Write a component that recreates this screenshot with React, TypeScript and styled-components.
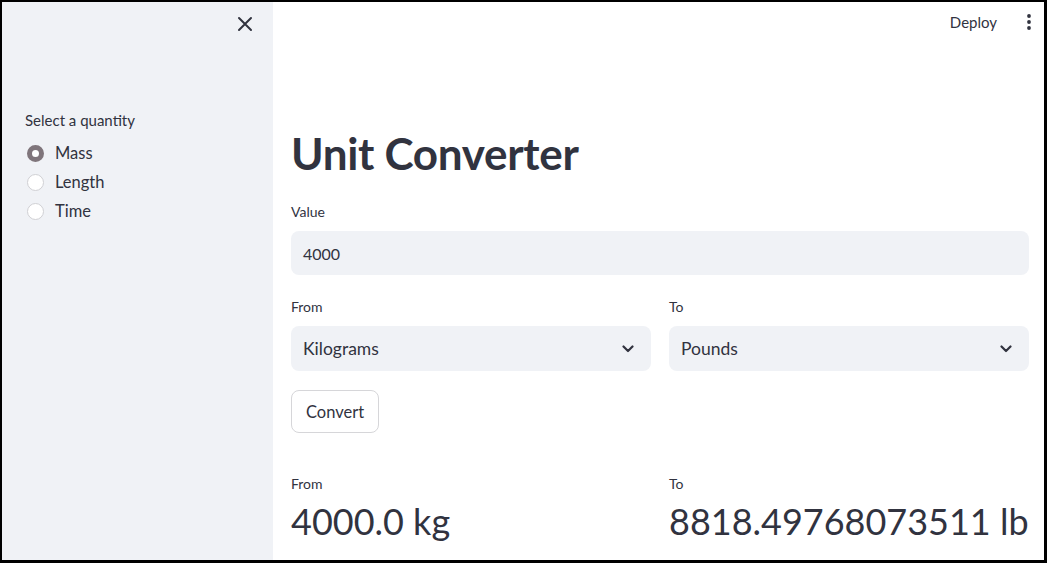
import React from "react";
import styled, {createGlobalStyle} from "styled-components";

const GlobalStyle = createGlobalStyle`
  html, body {
    margin: 0;
    padding: 0;
    background: #ffffff;
  }
  body {
    font-family: Lato, "Noto Sans", sans-serif;
    color: #31333f;
  }
`;

const quantities = ["Mass", "Length", "Time"];

function CloseIcon() {
    return (
        <svg width="16" height="16" viewBox="0 0 16 16">
            <path d="M2 2 L14 14 M14 2 L2 14" stroke="#31333f" strokeWidth="2" strokeLinecap="round"/>
        </svg>
    );
}

function Chevron() {
    return (
        <svg width="12" height="8" viewBox="0 0 12 8">
            <path d="M1.5 1.5 L6 6 L10.5 1.5" stroke="#31333f" strokeWidth="2.2" fill="none" strokeLinecap="round"
                  strokeLinejoin="round"/>
        </svg>
    );
}

function Kebab() {
    return (
        <svg width="6" height="18" viewBox="0 0 6 18">
            <circle cx="3" cy="3" r="1.9" fill="#31333f"/>
            <circle cx="3" cy="9" r="1.9" fill="#31333f"/>
            <circle cx="3" cy="15" r="1.9" fill="#31333f"/>
        </svg>
    );
}

export default function App() {
    return (
        <>
            <GlobalStyle/>
            <Frame>
                <Sidebar>
                    <CloseRow>
                        <IconButton><CloseIcon/></IconButton>
                    </CloseRow>
                    <SideLabel>Select a quantity</SideLabel>
                    <RadioGroup>
                        {quantities.map((q, i) => (
                            <RadioRow key={q}>
                                <RadioDot checked={i === 0}/>
                                <RadioText>{q}</RadioText>
                            </RadioRow>
                        ))}
                    </RadioGroup>
                </Sidebar>
                <Main>
                    <Header>
                        <DeployButton>Deploy</DeployButton>
                        <IconButton><Kebab/></IconButton>
                    </Header>
                    <Content>
                        <Title>Unit Converter</Title>
                        <FieldLabel>Value</FieldLabel>
                        <InputBox>4000</InputBox>
                        <TwoCols>
                            <div>
                                <FieldLabel>From</FieldLabel>
                                <SelectBox>
                                    <span>Kilograms</span>
                                    <Chevron/>
                                </SelectBox>
                            </div>
                            <div>
                                <FieldLabel>To</FieldLabel>
                                <SelectBox>
                                    <span>Pounds</span>
                                    <Chevron/>
                                </SelectBox>
                            </div>
                        </TwoCols>
                        <ConvertButton>Convert</ConvertButton>
                        <TwoCols $top={41}>
                            <div>
                                <MetricLabel>From</MetricLabel>
                                <MetricValue>4000.0 kg</MetricValue>
                            </div>
                            <div>
                                <MetricLabel>To</MetricLabel>
                                <MetricValue>8818.49768073511 lb</MetricValue>
                            </div>
                        </TwoCols>
                    </Content>
                </Main>
            </Frame>
        </>
    );
}

const Frame = styled.div`
  width: 1047px;
  height: 563px;
  box-sizing: border-box;
  border-style: solid;
  border-color: #000;
  border-width: 2px 3px 3px 2px;
  display: flex;
  overflow: hidden;
`;

const Sidebar = styled.aside`
  width: 271px;
  flex: none;
  background: #f0f2f6;
  padding: 12px 23px 0 23px;
  box-sizing: border-box;
  display: flex;
  flex-direction: column;
`;

const CloseRow = styled.div`
  display: flex;
  justify-content: flex-end;
  margin-right: -5px;
`;

const IconButton = styled.span`
  display: flex;
  align-items: center;
  justify-content: center;
  width: 20px;
  height: 20px;
`;

const SideLabel = styled.div`
  margin-top: 76px;
  font-size: 15px;
  line-height: 20px;
`;

const RadioGroup = styled.div`
  display: flex;
  flex-direction: column;
  gap: 7px;
  margin-top: 12px;
`;

const RadioRow = styled.div`
  display: flex;
  align-items: center;
  gap: 11px;
  height: 22px;
`;

const RadioDot = styled.span<{ checked: boolean }>`
  width: 17px;
  height: 17px;
  border-radius: 50%;
  box-sizing: border-box;
  margin-left: 2px;
  background: #ffffff;
  border: ${p => p.checked ? "5.5px solid #7f757b" : "1px solid #d0d0d4"};
`;

const RadioText = styled.span`
  font-size: 16.5px;
`;

const Main = styled.main`
  flex: 1;
  min-width: 0;
  display: flex;
  flex-direction: column;
  background: #fff;
`;

const Header = styled.div`
  display: flex;
  justify-content: flex-end;
  align-items: center;
  gap: 22px;
  height: 40px;
  padding-right: 5px;
`;

const DeployButton = styled.span`
  font-size: 15px;
`;

const Content = styled.div`
  padding: 0 15px 0 18px;
  display: flex;
  flex-direction: column;
`;

const Title = styled.h1`
  margin: 85px 0 23px;
  font-size: 44px;
  font-weight: 700;
  line-height: 52px;
  letter-spacing: -0.3px;
`;

const FieldLabel = styled.div`
  font-size: 14px;
  line-height: 20px;
  margin-bottom: 9px;
`;

const InputBox = styled.div`
  height: 44px;
  border-radius: 8px;
  background: #f0f2f6;
  display: flex;
  align-items: center;
  padding: 0 12px;
  font-size: 16px;
`;

const TwoCols = styled.div<{ $top?: number }>`
  display: grid;
  grid-template-columns: minmax(0, 1fr) minmax(0, 1fr);
  gap: 18px;
  margin-top: ${p => p.$top ?? 22}px;
`;

const SelectBox = styled.div`
  height: 45px;
  border-radius: 8px;
  background: #f0f2f6;
  display: flex;
  align-items: center;
  justify-content: space-between;
  padding: 0 17px 0 12px;
  font-size: 17.5px;
`;

const ConvertButton = styled.button`
  align-self: flex-start;
  margin-top: 19px;
  height: 43px;
  padding: 0 14px;
  border: 1px solid #d6d6d9;
  border-radius: 8px;
  background: #fff;
  font-family: inherit;
  font-size: 16.5px;
  color: #31333f;
`;

const MetricLabel = styled.div`
  font-size: 14px;
  line-height: 20px;
  margin-bottom: 5px;
`;

const MetricValue = styled.div`
  font-size: 36px;
  line-height: 44px;
  font-weight: 400;
  white-space: nowrap;
`;
